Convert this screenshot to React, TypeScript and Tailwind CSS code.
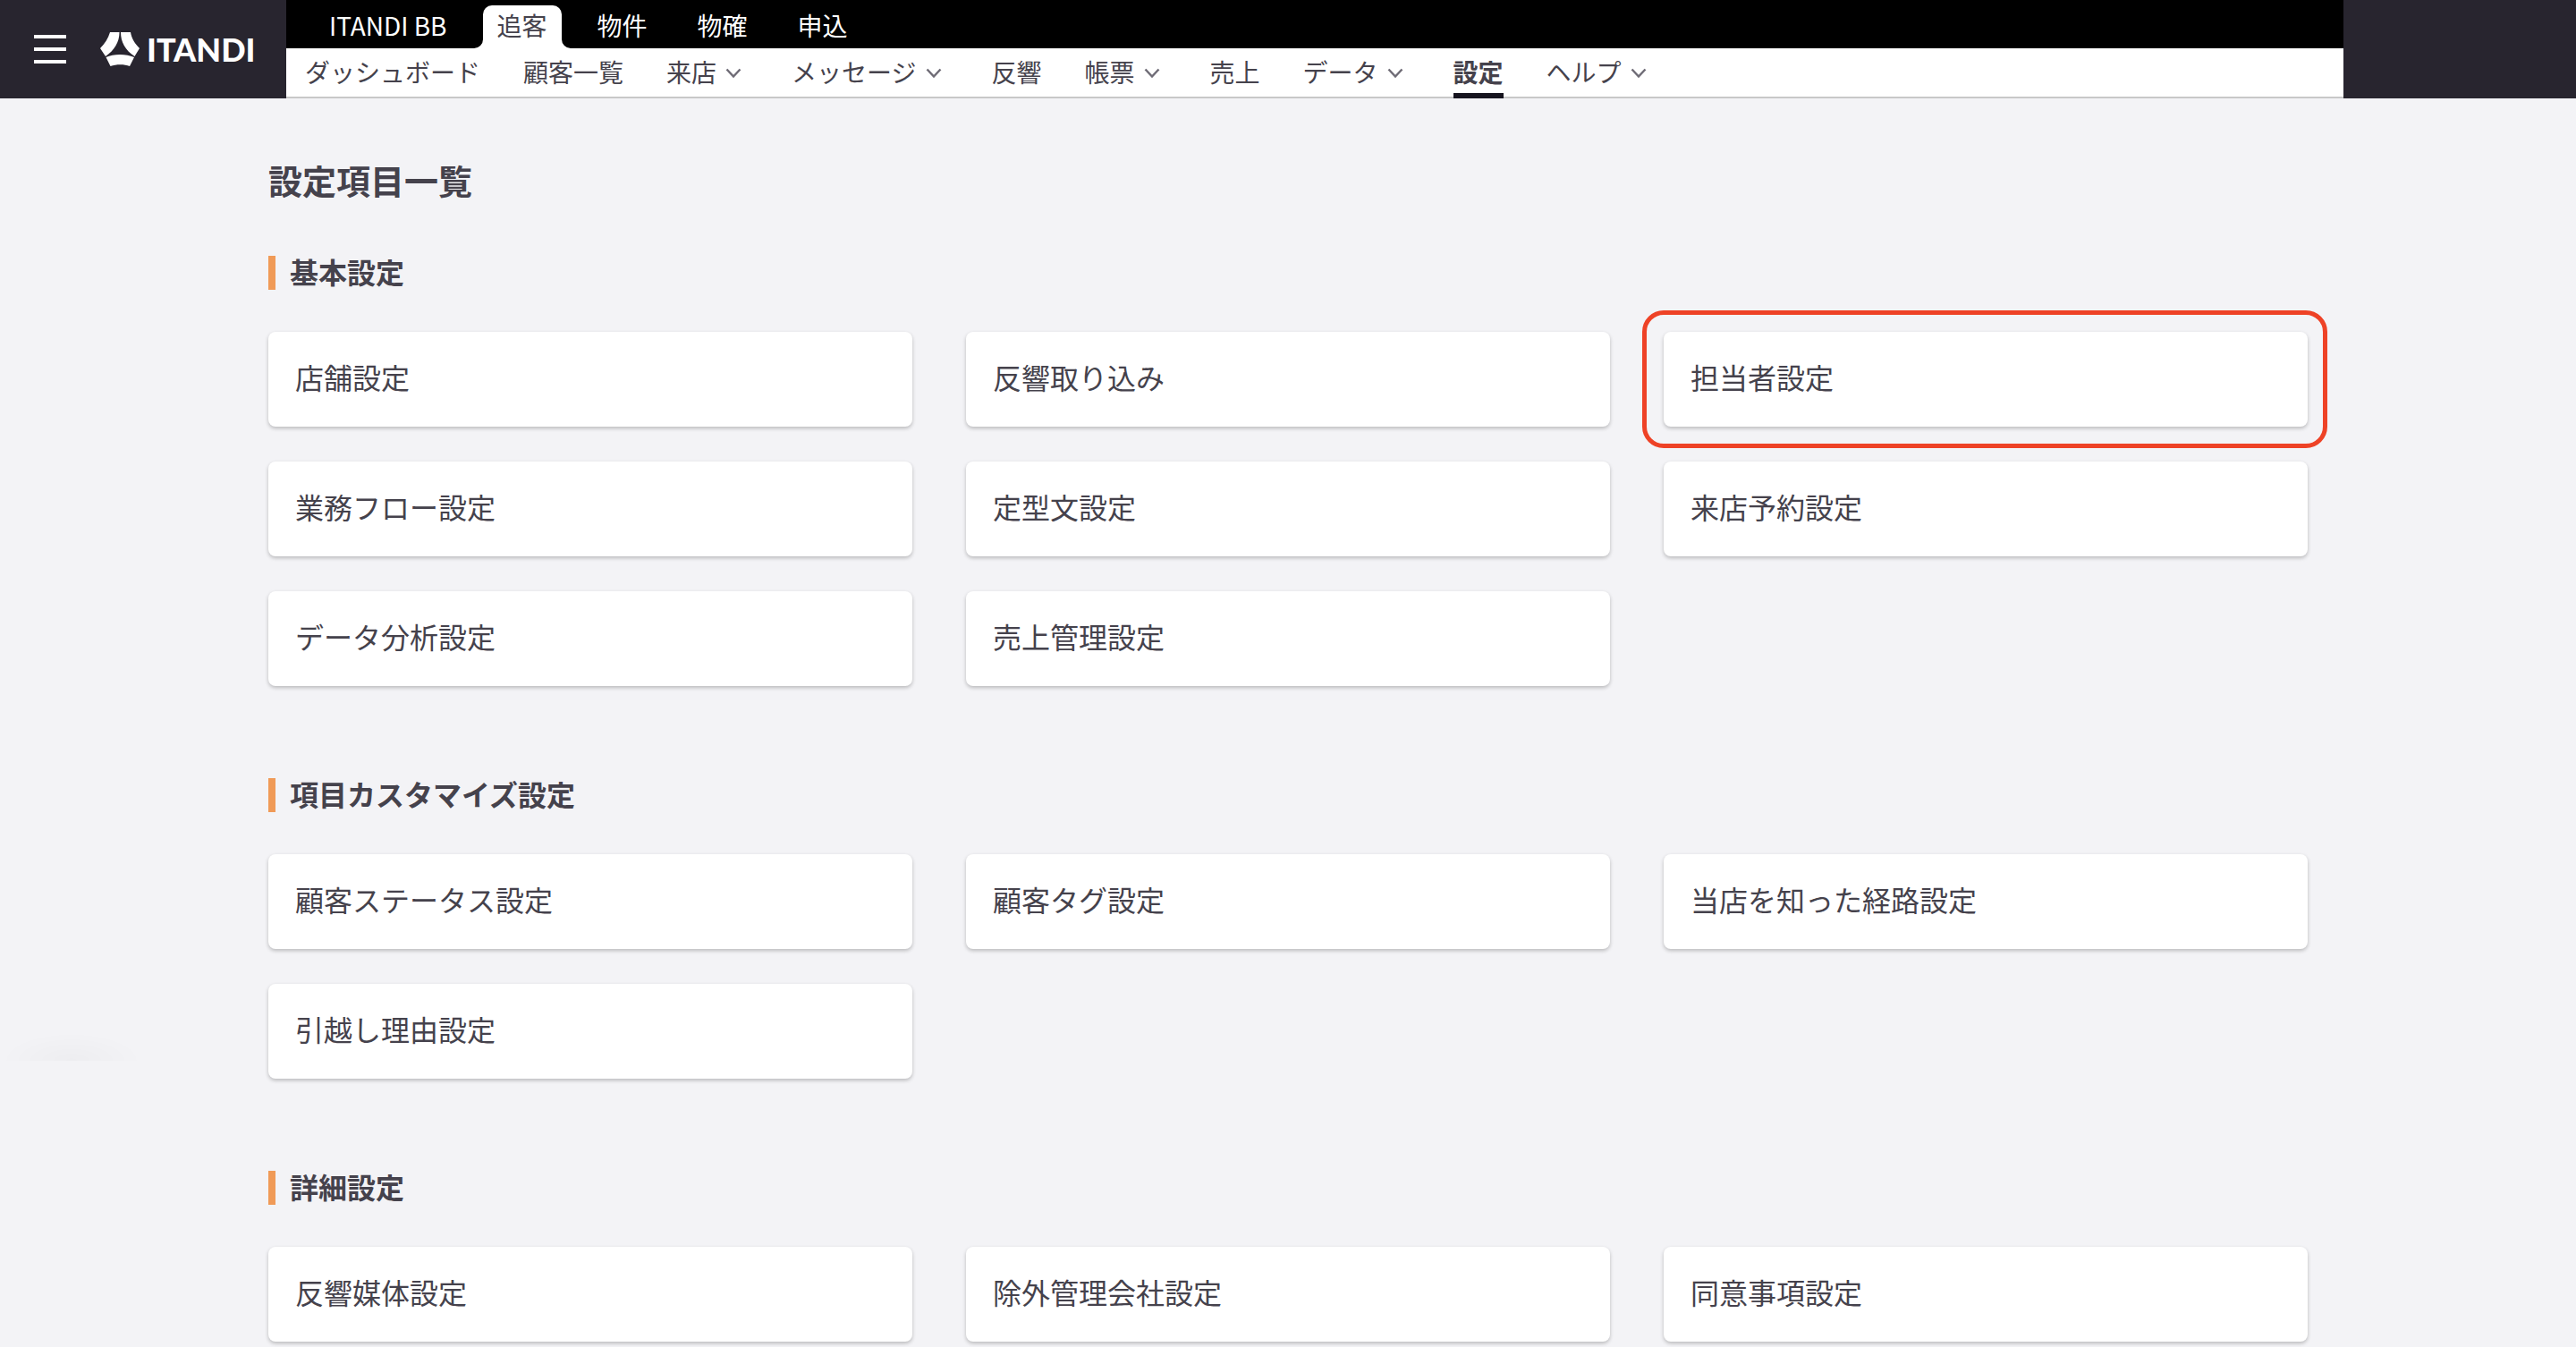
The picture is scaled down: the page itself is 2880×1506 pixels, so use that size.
const productTabs = ["ITANDI BB", "追客", "物件", "物確", "申込"];
const activeTab = "追客";

interface NavItem {
	label: string;
	menu?: boolean;
}

const navItems: NavItem[] = [
	{ label: "ダッシュボード" },
	{ label: "顧客一覧" },
	{ label: "来店", menu: true },
	{ label: "メッセージ", menu: true },
	{ label: "反響" },
	{ label: "帳票", menu: true },
	{ label: "売上" },
	{ label: "データ", menu: true },
	{ label: "設定" },
	{ label: "ヘルプ", menu: true },
];
const activeNav = "設定";

const sections = [
	{
		title: "基本設定",
		items: [
			"店舗設定",
			"反響取り込み",
			"担当者設定",
			"業務フロー設定",
			"定型文設定",
			"来店予約設定",
			"データ分析設定",
			"売上管理設定",
		],
	},
	{
		title: "項目カスタマイズ設定",
		items: [
			"顧客ステータス設定",
			"顧客タグ設定",
			"当店を知った経路設定",
			"引越し理由設定",
		],
	},
	{
		title: "詳細設定",
		items: ["反響媒体設定", "除外管理会社設定", "同意事項設定"],
	},
];
const highlighted = "担当者設定";

function Logo() {
	return (
		<a href="#" className="flex items-center gap-2 text-white">
			<svg viewBox="0 0 44 38" className="h-[38px] w-11" fill="currentColor" aria-hidden="true">
				<path d="M11 0H21.500C21.500 11 16 20 6 27L0 18C5 13 9 7 11 0Z" />
				<path d="M23 0H34C35 7 39 13 44 18L38.500 27C28 20 23 11 23 0Z" />
				<path d="M6.500 28C15 24 29 24 38 28L33 38C27 35.500 18 35.500 11.500 38Z" />
			</svg>
			<span className="font-[Lato,sans-serif] text-4xl leading-none font-black">ITANDI</span>
		</a>
	);
}

function ProductTab({ label }: { label: string }) {
	if (label !== activeTab) {
		return (
			<a href="#" className="flex h-12 items-center px-7 pb-1">
				{label}
			</a>
		);
	}
	return (
		<a
			href="#"
			className="relative mx-3 flex h-12 items-center rounded-t-[10px] bg-white px-4 pb-1 text-[#45424c]"
		>
			<svg viewBox="0 0 10 10" className="absolute right-full bottom-0 size-[10px]" fill="#fff">
				<path d="M10 0V10H0A10 10 0 0 0 10 0Z" />
			</svg>
			{label}
			<svg viewBox="0 0 10 10" className="absolute bottom-0 left-full size-[10px]" fill="#fff">
				<path d="M0 0V10H10A10 10 0 0 1 0 0Z" />
			</svg>
		</a>
	);
}

function NavLink({ label, menu }: NavItem) {
	if (menu) {
		return (
			<button type="button" className="mr-1 flex h-14 items-center gap-2 pb-1">
				{label}
				<svg viewBox="0 0 24 24" className="size-6" fill="none" stroke="#6f6c76" strokeWidth="2.500">
					<path d="M3.500 9.500L11 17.500L18.500 9.500" />
				</svg>
			</button>
		);
	}
	const active = label === activeNav;
	return (
		<a
			href="#"
			className={
				active
					? "flex h-14 items-center border-b-[6px] border-[#16141f] pt-[2px] font-bold"
					: "flex h-14 items-center pb-1"
			}
		>
			{label}
		</a>
	);
}

function Header() {
	return (
		<header className="flex h-[110px] bg-[#28252f]">
			<div className="flex w-80 shrink-0 items-center gap-[38px] pl-[38px]">
				<button type="button" aria-label="メニュー" className="flex w-9 flex-col gap-[10px]">
					<span className="h-1 bg-white" />
					<span className="h-1 bg-white" />
					<span className="h-1 bg-white" />
				</button>
				<Logo />
			</div>
			<div className="min-w-0 flex-1 text-[28px] leading-10">
				<div className="flex h-[54px] items-end bg-black pl-5 text-white">
					{productTabs.map((label) => (
						<ProductTab key={label} label={label} />
					))}
				</div>
				<nav className="flex h-14 gap-12 bg-white pl-[21px] shadow-[inset_0_-2px_0_#c8c8c8]">
					{navItems.map((item) => (
						<NavLink key={item.label} {...item} />
					))}
				</nav>
			</div>
			<div className="w-[260px] shrink-0" />
		</header>
	);
}

function SettingCard({ label }: { label: string }) {
	return (
		<a
			href="#"
			className="relative flex h-[106px] items-center rounded-lg bg-white px-[30px] pb-[6px] text-[32px] shadow-[0_2px_4px_rgba(0,0,0,0.24)]"
		>
			{label}
			{label === highlighted && (
				<span className="absolute -inset-y-6 -right-[22px] -left-6 rounded-3xl border-[5px] border-[#ee4226]" />
			)}
		</a>
	);
}

export default function App() {
	return (
		<div className="min-h-screen bg-[#f3f3f6] font-['Noto_Sans_CJK_JP',sans-serif] text-[#45424c]">
			<Header />
			<main className="px-[300px] pt-16">
				<h1 className="text-[38px] leading-[54px] font-bold">設定項目一覧</h1>
				<div className="mt-[58px] flex flex-col gap-[103px]">
					{sections.map((section) => (
						<section key={section.title}>
							<h2 className="border-l-8 border-[#f09a57] pb-1 pl-4 text-[32px] leading-[34px] font-bold">
								{section.title}
							</h2>
							<div className="mt-[47px] grid grid-cols-3 gap-x-[60px] gap-y-[39px]">
								{section.items.map((item) => (
									<SettingCard key={item} label={item} />
								))}
							</div>
						</section>
					))}
				</div>
			</main>
			{/* soft shadow of the collapsed side widget */}
			<div className="pointer-events-none fixed bottom-80 left-0 h-8 w-40 bg-[radial-gradient(ellipse_at_bottom,rgba(0,0,0,0.024),transparent_70%)]" />
		</div>
	);
}
